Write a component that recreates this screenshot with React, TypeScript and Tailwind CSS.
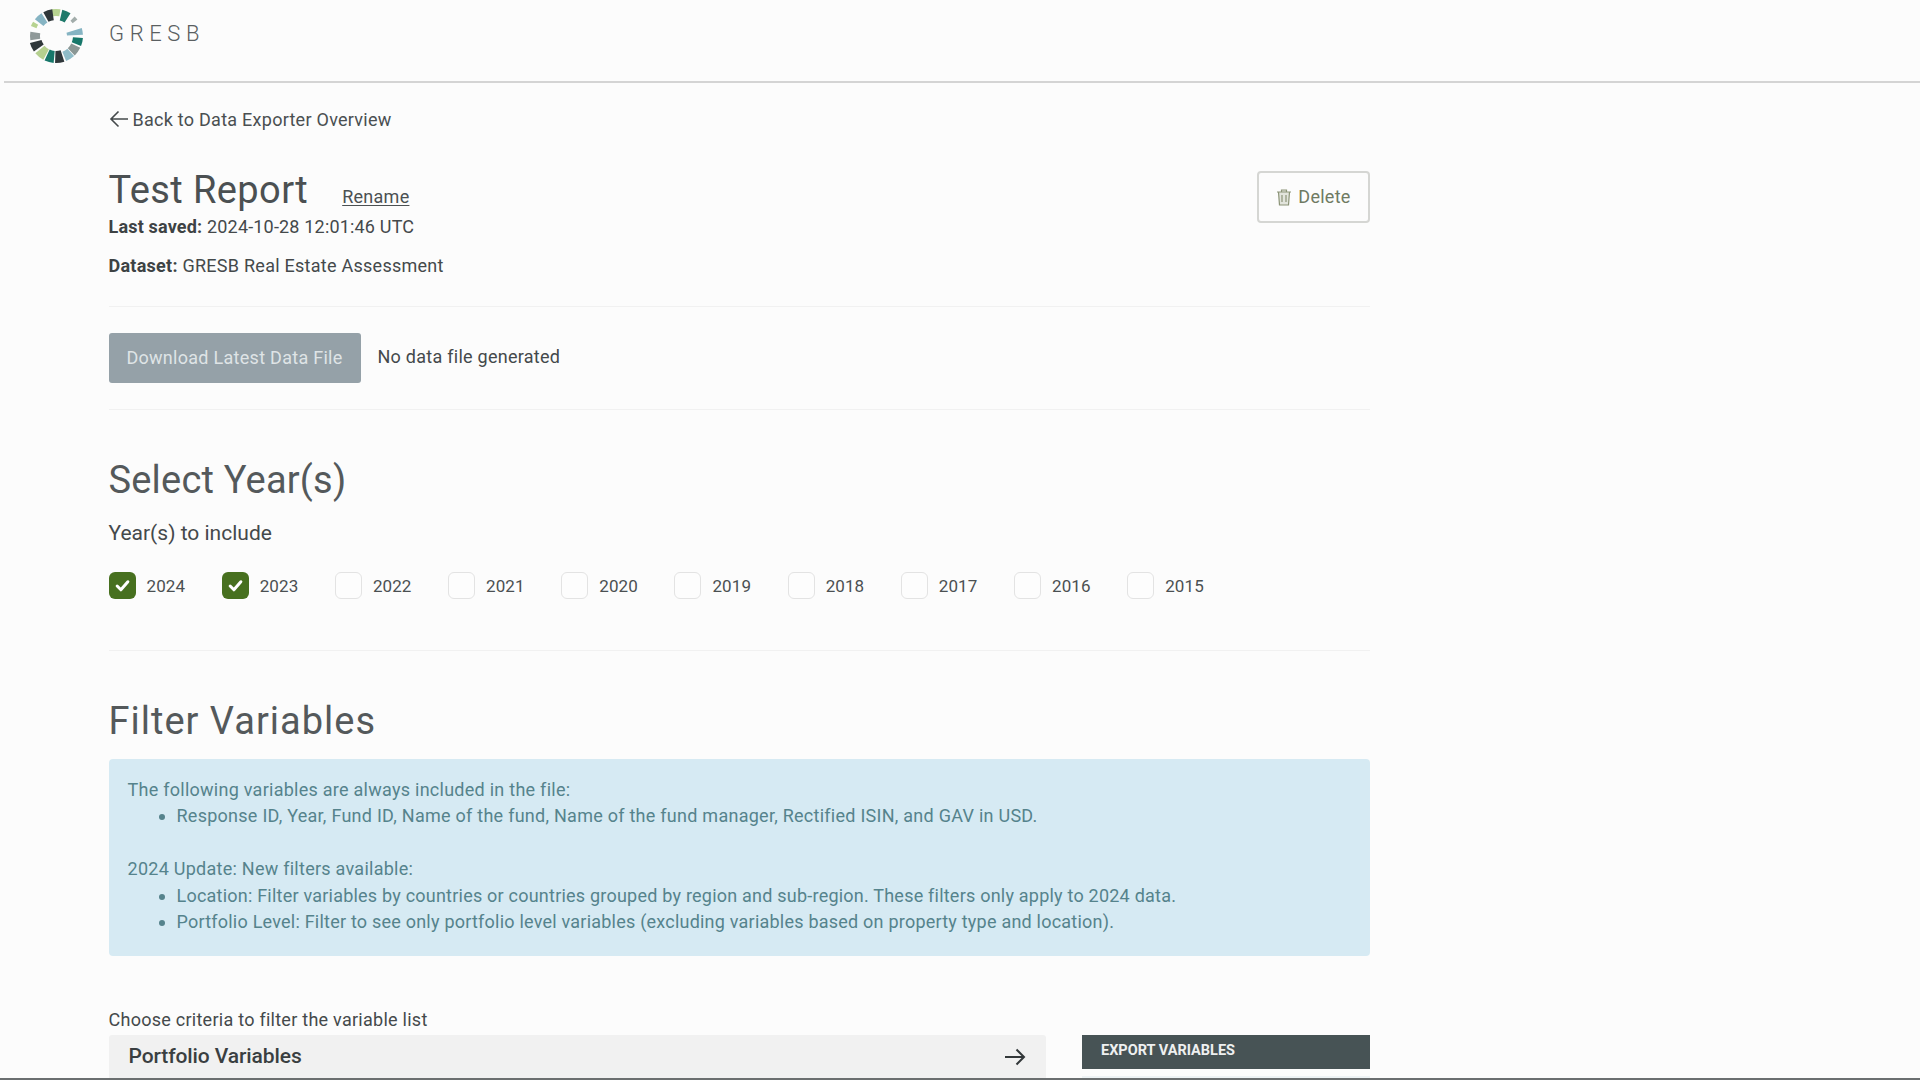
import React from "react";

const wedges: [number, number, number, number, string][] = [
  [0, 19, 20, 27, "#b7d391"],
  [23, 19, 16, 27, "#1f7a6b"],
  [48, 9, 21, 27, "#a3adab"],
  [80, 15, 11, 27, "#86b4c3"],
  [103, 18, 17, 27, "#17776a"],
  [126, 20, 17, 27, "#8b9795"],
  [148, 20, 17, 27, "#8fbcc8"],
  [172, 20, 15, 27, "#2f373a"],
  [195, 20, 15, 27, "#17776a"],
  [219, 22, 15, 27, "#b5d08f"],
  [245, 20, 15, 27, "#2f373a"],
  [270, 19, 16, 26, "#8f9999"],
  [297, 10, 21, 27, "#b7d391"],
  [318, 19, 16, 27, "#86b4c3"],
  [342, 20, 16, 27, "#2f373a"],
];

function wedgePath(a: number, span: number, r1: number, r2: number) {
  const p = (deg: number, r: number) => {
    const t = ((deg - 90) * Math.PI) / 180;
    return `${(30 + r * Math.cos(t)).toFixed(2)} ${(30 + r * Math.sin(t)).toFixed(2)}`;
  };
  const s = a - span / 2;
  const e = a + span / 2;
  return `M${p(s, r1)} L${p(s, r2)} A${r2} ${r2} 0 0 1 ${p(e, r2)} L${p(e, r1)} A${r1} ${r1} 0 0 0 ${p(s, r1)}Z`;
}

function Logo() {
  return (
    <svg width="60" height="60" viewBox="0 0 60 60" className="shrink-0">
      {wedges.map(([a, s, r1, r2, c]) => (
        <path key={a} d={wedgePath(a, s, r1, r2)} fill={c} />
      ))}
    </svg>
  );
}

function Check({ year, on }: { year: number; on: boolean }) {
  return (
    <div className="flex w-[113.2px] shrink-0 items-center gap-[11px]">
      {on ? (
        <span className="flex h-[27px] w-[27px] items-center justify-center rounded-[6px] bg-[#47701f]">
          <svg width="15" height="13" viewBox="0 0 14 12" fill="none" stroke="#ffffff" strokeWidth="2.8" strokeLinecap="round" strokeLinejoin="round">
            <path d="M2 6.5 L5.5 10 L12 2.5" />
          </svg>
        </span>
      ) : (
        <span className="h-[27px] w-[27px] rounded-[6px] border border-[#e3e3e3] bg-[#fdfdfd]" />
      )}
      <span className="text-[17px] leading-6 tracking-[0.1px] text-[#4b5052]">{year}</span>
    </div>
  );
}

export default function App() {
  return (
    <div
      className="relative h-[1080px] w-[1920px] overflow-hidden bg-[#fcfcfc] text-[#44494b]"
      style={{ fontFamily: '"Roboto", "Liberation Sans", sans-serif' }}
    >
      <header className="ml-[4px] flex h-[83px] items-start border-b-2 border-[#d4d4d4] pl-[22px] pt-[6px]">
        <Logo />
        <span className="ml-[23px] mt-[15px] text-[22px] font-light leading-[26px] tracking-[5.6px] text-[#5a5f61]">GRESB</span>
      </header>

      <main className="w-[1370px] pl-[108.5px] text-[18px] tracking-[0.26px]">
        <div className="mt-[24px] flex h-[24px] items-center gap-[3px] text-[#4a4f51]">
          <svg width="21" height="18" viewBox="0 0 21 18" fill="none" stroke="#44494b" strokeWidth="1.6">
            <path d="M19 9 H2 M9.5 1.5 L2 9 L9.5 16.5" />
          </svg>
          <span>Back to Data Exporter Overview</span>
        </div>

        <div className="mt-[33px] flex items-start justify-between">
          <div>
            <div className="flex h-[52px] items-center">
              <h1 className="text-[38px] font-normal leading-[52px] tracking-[0.4px] text-[#4b5052]">Test Report</h1>
              <a className="ml-[34px] mt-[12px] text-[#4b5052] underline underline-offset-2">Rename</a>
            </div>
            <p className="-mt-[1px] leading-6 tracking-[0.18px]"><b className="font-bold text-[#3d4244]">Last saved:</b> 2024-10-28 12:01:46 UTC</p>
            <p className="mt-[15px] leading-6"><b className="font-bold text-[#3d4244]">Dataset:</b> GRESB Real Estate Assessment</p>
          </div>
          <button className="mt-[7px] flex h-[52px] w-[113px] items-center justify-center gap-[6px] rounded-[4px] border-2 border-[#d5d6d3] pb-[2px] font-normal text-[#6f7a62]">
            <svg width="16" height="18" viewBox="0 0 16 18" fill="#e2e4dc" stroke="#8c9478" strokeWidth="1.2" className="mt-[2px]">
              <path d="M1 4 H15 M5.5 4 V2 H10.5 V4 M2.5 4 L3.5 17 H12.5 L13.5 4Z M6 7 V14 M10 7 V14" />
            </svg>
            Delete
          </button>
        </div>

        <hr className="mt-[28px] border-t border-[#f1f1f1]" />

        <div className="mt-[26px] flex h-[50px] items-center">
          <button className="h-[50px] w-[252px] rounded-[3px] bg-[#95a1a8] pb-[2px] font-normal tracking-[0.28px] text-[#dfe4e6]">Download Latest Data File</button>
          <span className="mb-[3px] ml-[17px] text-[#44494b]">No data file generated</span>
        </div>

        <hr className="mt-[26px] border-t border-[#f1f1f1]" />

        <h2 className="mt-[46px] text-[38px] font-normal leading-[48px] tracking-[0.2px] text-[#54595b]">Select Year(s)</h2>
        <p className="mt-[17px] text-[21px] leading-6 tracking-normal text-[#44494b]">Year(s) to include</p>

        <div className="mt-[27px] flex">
          {[2024, 2023, 2022, 2021, 2020, 2019, 2018, 2017, 2016, 2015].map((y) => (
            <Check key={y} year={y} on={y >= 2023} />
          ))}
        </div>

        <hr className="mt-[51px] border-t border-[#f1f1f1]" />

        <h2 className="mt-[46px] text-[38px] font-normal leading-[48px] tracking-[1px] text-[#54595b]">Filter Variables</h2>

        <div className="mt-[14px] h-[197px] rounded-[4px] bg-[#d6eaf3] px-[19px] pt-[18px] leading-[26.4px] text-[#55838c]">
          <p>The following variables are always included in the file:</p>
          <ul className="list-disc pl-[49px]">
            <li>Response ID, Year, Fund ID, Name of the fund, Name of the fund manager, Rectified ISIN, and GAV in USD.</li>
          </ul>
          <p className="mt-[26.4px]">2024 Update: New filters available:</p>
          <ul className="list-disc pl-[49px] tracking-[0.22px]">
            <li>Location: Filter variables by countries or countries grouped by region and sub-region. These filters only apply to 2024 data.</li>
            <li>Portfolio Level: Filter to see only portfolio level variables (excluding variables based on property type and location).</li>
          </ul>
        </div>

        <p className="mt-[52px] leading-6 text-[#44494b]">Choose criteria to filter the variable list</p>

        <div className="mt-[3px] flex items-start justify-between">
          <div className="flex h-[43px] w-[937px] items-center justify-between rounded-t-[3px] bg-[#f1f1f1] px-[20px]">
            <span className="text-[21px] font-medium tracking-[-0.1px] text-[#3a3f41]">Portfolio Variables</span>
            <svg width="22" height="18" viewBox="0 0 22 18" fill="none" stroke="#33383a" strokeWidth="2">
              <path d="M1 9 H20 M12.5 1.5 L20 9 L12.5 16.5" />
            </svg>
          </div>
          <div className="w-[288px]">
            <div className="flex h-[34px] items-center bg-[#475355] pb-[2px] pl-[19px] text-[14.5px] font-bold tracking-normal text-[#eef0f0]">EXPORT VARIABLES</div>
            <div className="mt-[7px] h-[3px] bg-[#eef3f5]" />
          </div>
        </div>
      </main>

      <div className="absolute bottom-0 left-0 h-[2px] w-full bg-[#6b6f70]" />
    </div>
  );
}
